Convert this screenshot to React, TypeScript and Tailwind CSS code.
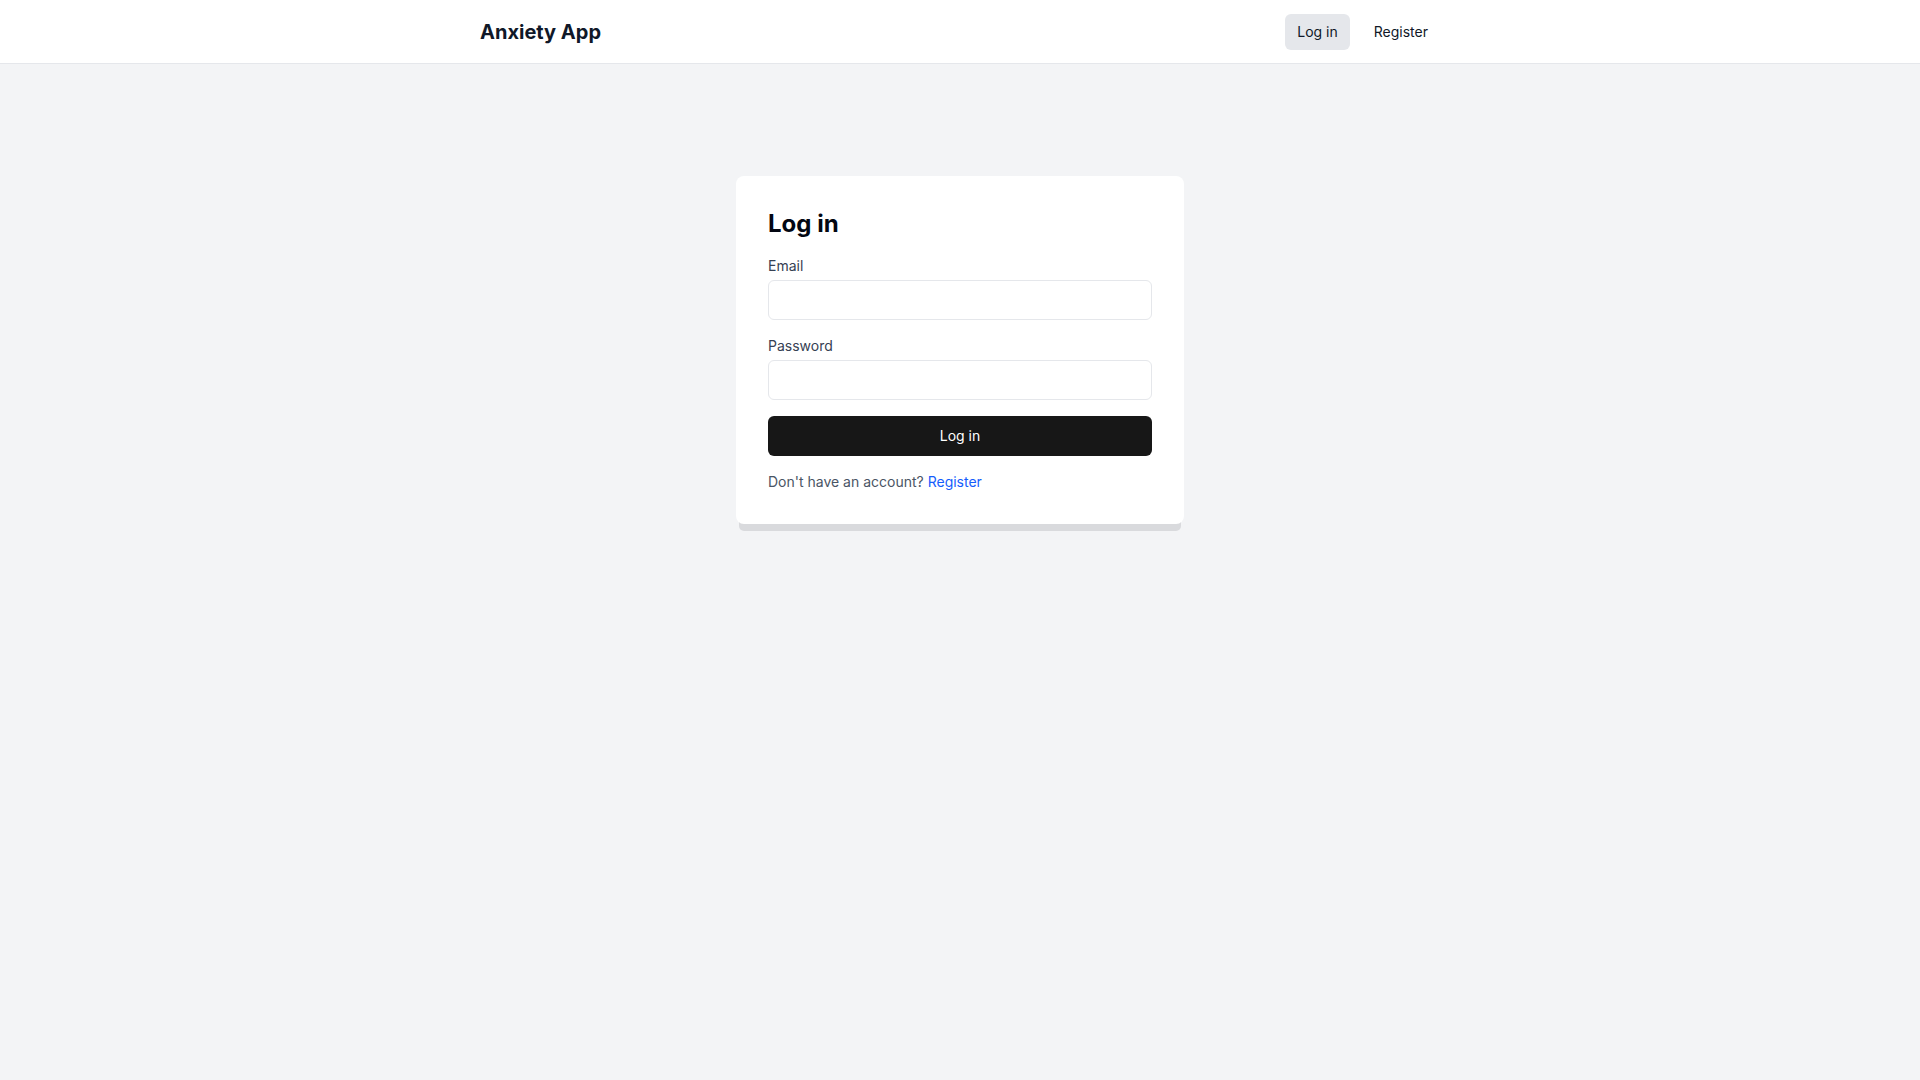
import React from 'react'

const App = () => {
  return (
    <div className="min-h-screen bg-gray-100 font-['Inter',sans-serif] text-gray-900">
      {/* Top nav */}
      <header className="h-16 bg-white border-b border-gray-200">
        <div className="max-w-5xl mx-auto px-8 h-full flex items-center justify-between">
          <a href="#" className="text-xl font-bold text-gray-900">
            Anxiety App
          </a>
          <nav className="flex items-center gap-3">
            <a href="#" className="px-3 py-2 rounded-md bg-gray-200 text-sm text-gray-900">
              Log in
            </a>
            <a href="#" className="px-3 py-2 rounded-md text-sm text-gray-900">
              Register
            </a>
          </nav>
        </div>
      </header>

      {/* Login card */}
      <main className="pt-28 px-4">
        <div className="max-w-md mx-auto bg-white rounded-lg p-8 shadow-[0_10px_0_-3px_#d9dadd]">
          <h1 className="text-2xl font-bold text-gray-950 mb-4">Log in</h1>
          <form className="space-y-4" onSubmit={(e) => e.preventDefault()}>
            <div>
              <label htmlFor="email" className="block text-sm text-gray-700 mb-1">
                Email
              </label>
              <input
                id="email"
                type="email"
                className="block w-full h-10 px-3 rounded-md border border-gray-200 bg-white text-sm outline-none"
              />
            </div>
            <div>
              <label htmlFor="password" className="block text-sm text-gray-700 mb-1">
                Password
              </label>
              <input
                id="password"
                type="password"
                className="block w-full h-10 px-3 rounded-md border border-gray-200 bg-white text-sm outline-none"
              />
            </div>
            <button
              type="submit"
              className="w-full h-10 rounded-md bg-neutral-900 text-white text-sm"
            >
              Log in
            </button>
          </form>
          <p className="mt-4 text-sm text-gray-600">
            Don't have an account?{' '}
            <a href="#" className="text-blue-600">
              Register
            </a>
          </p>
        </div>
      </main>
    </div>
  )
}

export default App
